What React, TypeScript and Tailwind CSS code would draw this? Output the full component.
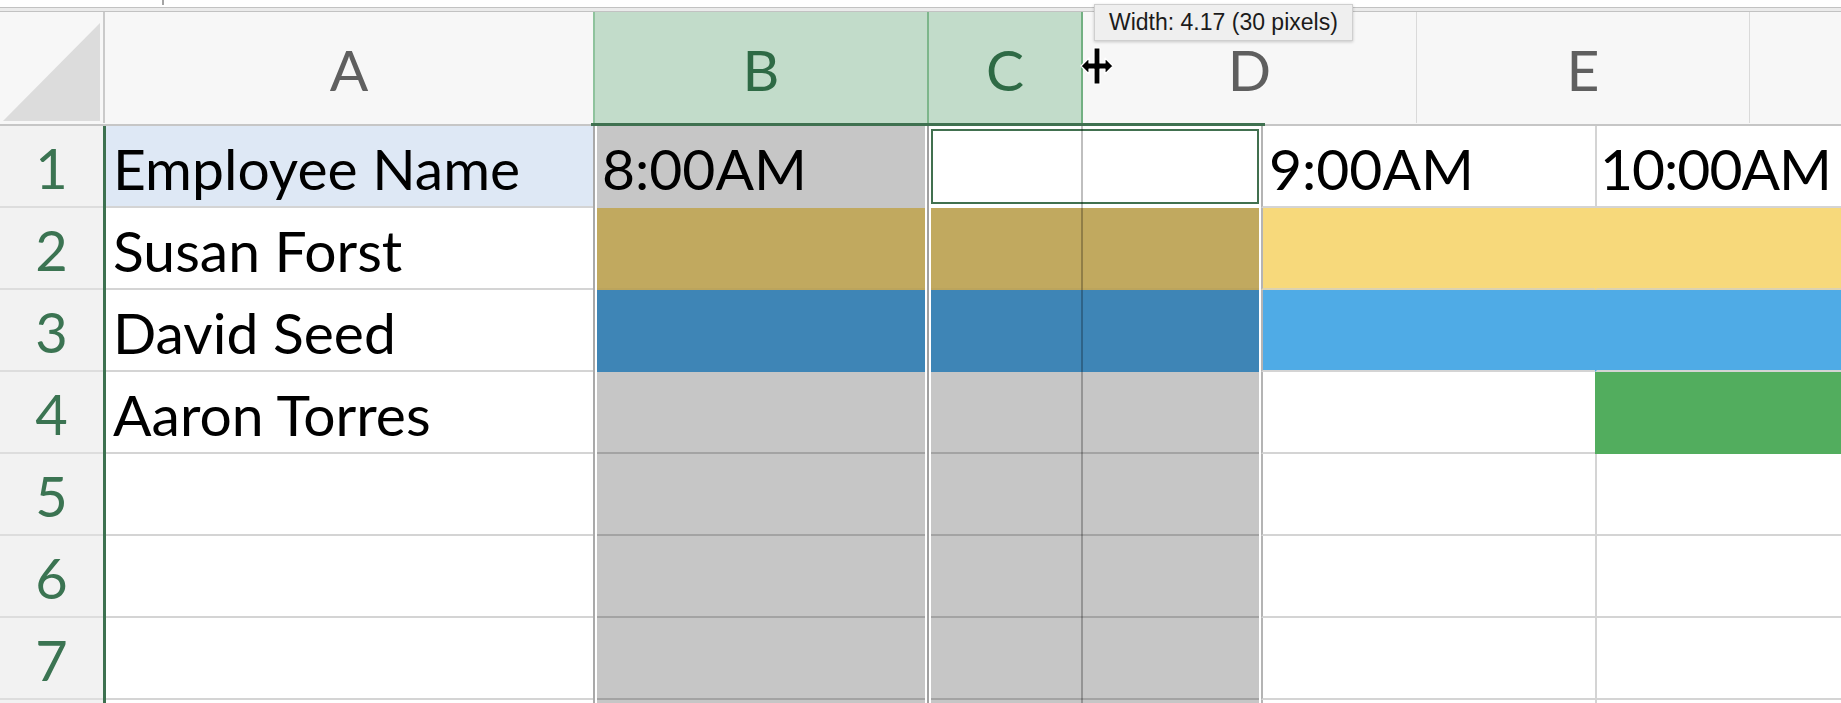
import React from 'react'

type Row = {
  n: string
  name?: string
  aBg: string
  sel: string
  d: string
  e: string
  b?: string
  dText?: string
  eText?: string
  active?: boolean
}

const rows: Row[] = [
  { n: '1', name: 'Employee Name', aBg: 'bg-[#dee8f5]', sel: 'bg-[#c6c6c6] border-[#c6c6c6]', d: 'bg-white border-b-[#d4d4d4]', e: 'bg-white border-b-[#d4d4d4] border-l-[#d4d4d4]', b: '8:00AM', dText: '9:00AM', eText: '10:00AM', active: true },
  { n: '2', name: 'Susan Forst', aBg: 'bg-white', sel: 'bg-[#c1a95f] border-[#bba45d]', d: 'bg-[#f7d97b] border-b-[#dcd2b0]', e: 'bg-[#f7d97b] border-b-[#dcd2b0] border-l-[#f7d97b]' },
  { n: '3', name: 'David Seed', aBg: 'bg-white', sel: 'bg-[#3e85b6] border-[#3e85b6]', d: 'bg-[#4fabe6] border-b-[#d4d4d4]', e: 'bg-[#4fabe6] border-b-[#d4d4d4] border-l-[#4fabe6]' },
  { n: '4', name: 'Aaron Torres', aBg: 'bg-white', sel: 'bg-[#c6c6c6] border-[#a3a3a3]', d: 'bg-white border-b-[#d4d4d4]', e: 'bg-[#52ad5e] border-b-[#52ad5e] border-l-[#52ad5e]' },
  { n: '5', aBg: 'bg-white', sel: 'bg-[#c6c6c6] border-[#a3a3a3]', d: 'bg-white border-b-[#d4d4d4]', e: 'bg-white border-b-[#d4d4d4] border-l-[#d4d4d4]' },
  { n: '6', aBg: 'bg-white', sel: 'bg-[#c6c6c6] border-[#a3a3a3]', d: 'bg-white border-b-[#d4d4d4]', e: 'bg-white border-b-[#d4d4d4] border-l-[#d4d4d4]' },
  { n: '7', aBg: 'bg-white', sel: 'bg-[#c6c6c6] border-[#a3a3a3]', d: 'bg-white border-b-[#d4d4d4]', e: 'bg-white border-b-[#d4d4d4] border-l-[#d4d4d4]' },
  { n: '', aBg: 'bg-white', sel: 'bg-[#c6c6c6] border-[#a3a3a3]', d: 'bg-white border-b-[#d4d4d4]', e: 'bg-white border-b-[#d4d4d4] border-l-[#d4d4d4]' },
]

const cellText = 'text-[57px] leading-none text-black whitespace-nowrap'

function ResizeCursor() {
  // column-resize cursor: thick vertical bar with left/right arrowheads
  return (
    <svg width="36" height="38" viewBox="0 0 36 38">
      <path
        d="M15 1h6v15h5v-5l8 8-8 8v-5h-5v15h-6V22h-5v5l-8-8 8-8v5h5z"
        fill="#000"
        stroke="#fff"
        strokeWidth="1.2"
        strokeLinejoin="round"
      />
    </svg>
  )
}

export default function App() {
  return (
    <div className="relative w-[1841px] h-[703px] overflow-hidden bg-white font-[family-name:Lato,sans-serif] select-none">
      {/* top strip */}
      <div className="h-[7px] bg-white flex">
        <div className="w-[162px]" />
        <div className="w-[2px] h-[5px] bg-[#a5a5a5]" />
      </div>
      <div className="h-[5px] bg-[#ebebeb] border-y border-[#c2c2c2]" />

      {/* column headers */}
      <div className="flex h-[111px] bg-[#f7f7f7] text-[57px] leading-none">
        <div className="w-[105px] shrink-0 border-r-2 border-[#cacaca] pl-[3px] pt-[11px]">
          <svg width="97" height="98" viewBox="0 0 97 98">
            <polygon points="97,0 97,98 0,98" fill="#dcdcdc" />
          </svg>
        </div>
        <div className="w-[488px] shrink-0 flex items-center justify-center pt-[3px] text-[#5f5f5f]">A</div>
        <div className="w-[334px] shrink-0 border-l-2 border-[#8fc39d] bg-[#c2dcca] flex items-center justify-center pt-[3px] text-[#2e6a45]">B</div>
        <div className="w-[156px] shrink-0 border-x-2 border-l-[#7db68b] border-r-[#72b082] bg-[#c2dcca] flex items-center justify-center pt-[3px] text-[#2e6a45]">C</div>
        <div className="w-[333px] shrink-0 flex items-center justify-center pt-[3px] text-[#5f5f5f]">D</div>
        <div className="w-[333px] shrink-0 border-l border-[#dadada] flex items-center justify-center pt-[3px] text-[#5f5f5f]">E</div>
        <div className="flex-1 border-l border-[#dadada]" />
      </div>
      <div className="flex h-[3px]">
        <div className="w-[591px] shrink-0 bg-[#f7f7f7] border-b-2 border-[#c6c6c6]" />
        <div className="w-[674px] shrink-0 bg-[#3f7150]" />
        <div className="flex-1 bg-[#f7f7f7] border-b-2 border-[#c6c6c6]" />
      </div>

      {/* grid */}
      {rows.map((r, i) => (
        <div key={i} className="flex h-[82px]">
          <div className="w-[103px] shrink-0 bg-[#f2f2f2] border-b-2 border-[#dddddd] flex items-center justify-center pt-[4px] text-[56px] leading-none text-[#3b7452]">
            {r.n}
          </div>
          <div className="w-[3px] shrink-0 bg-[#3d7150]" />
          <div className={`w-[487px] shrink-0 border-b-2 border-[#d4d4d4] flex items-center pl-[7px] pt-[4px] ${cellText} ${r.aBg}`}>
            {r.name}
          </div>
          <div className="w-[334px] shrink-0 border-l-2 border-[#a9a9a9] px-[2px] bg-white flex">
            <div className={`flex-1 border-b-2 flex items-center pl-[5px] pt-[4px] ${cellText} ${r.sel}`}>{r.b}</div>
          </div>
          <div className="w-[334px] shrink-0 border-l-2 border-[#a0a0a0] px-[2px] bg-white flex">
            {r.active ? (
              <div className="flex-1 pt-[3px]">
                <div className="h-[75px] border-2 border-[#41704f] bg-white" />
              </div>
            ) : (
              <div className={`flex-1 border-b-2 ${r.sel}`} />
            )}
          </div>
          <div className={`w-[334px] shrink-0 border-l-2 border-l-[#b4b4b4] border-b-2 flex items-center pl-[6px] pt-[4px] ${cellText} ${r.d}`}>
            {r.dText}
          </div>
          <div className={`flex-1 min-w-0 border-l-2 border-b-2 flex items-center pl-[3px] pt-[4px] tracking-[-1px] ${cellText} ${r.e}`}>
            {r.eText}
          </div>
        </div>
      ))}

      {/* column resize guide */}
      <div className="absolute left-[1081px] top-[126px] bottom-0 w-[2px] bg-black/25" />

      {/* width tooltip */}
      <div className="absolute left-[1094px] top-[4px] w-[259px] h-[37px] bg-[#efefef] border border-[#cfcfcf] shadow-[0_1px_3px_rgba(0,0,0,0.2)] flex items-center pl-[14px] font-[family-name:'Liberation_Sans',sans-serif] text-[23px] text-[#1b1b1b] whitespace-nowrap">
        Width: 4.17 (30 pixels)
      </div>

      {/* resize cursor */}
      <div className="absolute left-[1079px] top-[47px]">
        <ResizeCursor />
      </div>
    </div>
  )
}
